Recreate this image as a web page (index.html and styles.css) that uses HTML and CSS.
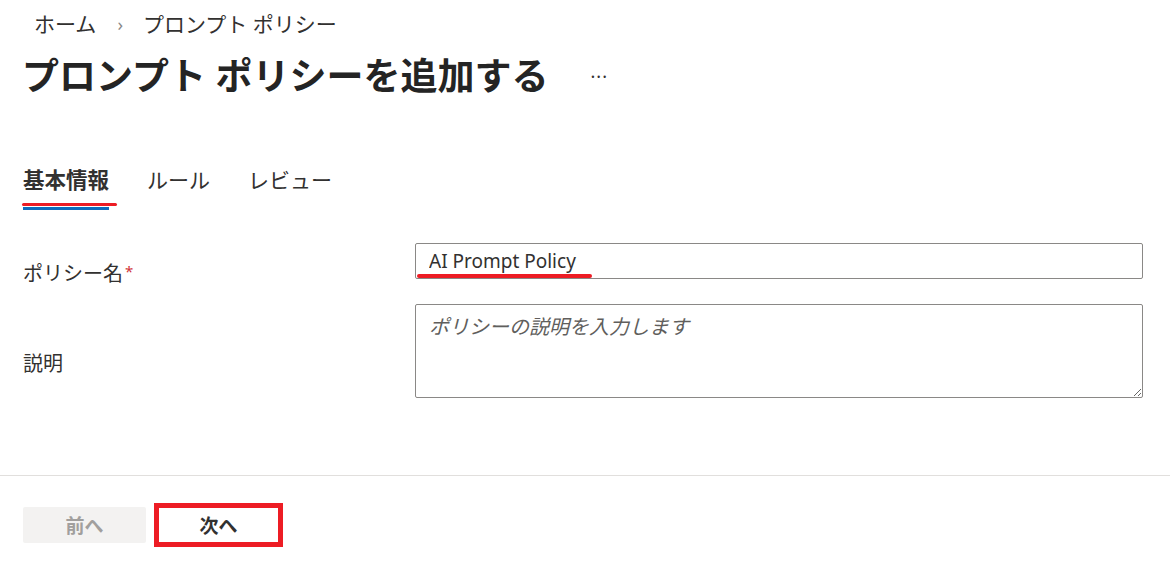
FILE: index.html
```html
<!DOCTYPE html>
<html lang="ja">
<head>
    <meta charset="UTF-8">
    <meta name="viewport" content="width=device-width, initial-scale=1.0">
    <title>プロンプト ポリシーを追加する</title>
    <link rel="stylesheet" href="styles.css">
</head>
<body>

<nav class="breadcrumb">
    <span class="crumb">ホーム</span>
    <span class="chevron">&#x203A;</span>
    <span class="crumb">プロンプト ポリシー</span>
</nav>

<div class="title-row">
    <h1>プロンプト ポリシーを追加する</h1>
    <span class="more">&middot;&middot;&middot;</span>
</div>

<div class="tabs">
    <div class="tab active">基本情報<span class="mark mark-tab"></span></div>
    <div class="tab">ルール</div>
    <div class="tab">レビュー</div>
</div>

<form class="form">
    <label class="label" for="policyName">ポリシー名<span class="req">*</span></label>
    <div class="field">
        <input type="text" id="policyName" value="AI Prompt Policy">
        <span class="mark mark-input"></span>
    </div>

    <label class="label" for="policyDesc">説明</label>
    <div class="field">
        <textarea id="policyDesc" placeholder="ポリシーの説明を入力します"></textarea>
    </div>
</form>

<div class="footer">
    <button class="btn btn-disabled" disabled>前へ</button>
    <button class="btn btn-next">次へ</button>
</div>

</body>
</html>
```

FILE: styles.css
```css
body {
    margin: 0;
    font-family: "Noto Sans", "Noto Sans CJK JP", sans-serif;
    color: #323130;
    background: #fff;
}

.breadcrumb {
    display: flex;
    align-items: center;
    height: 48px;
    padding-left: 34px;
    font-size: 21px;
    line-height: 28px;
}
.breadcrumb .chevron { color: #8a8886; font-size: 18px; margin: 0 20px 0 21px; }

.title-row {
    display: flex;
    align-items: center;
    height: 56px;
    padding-left: 22px;
}
.title-row h1 {
    margin: 0;
    font-size: 37px;
    line-height: 56px;
    font-weight: 700;
    color: #242424;
}
.title-row .more { margin-left: 42px; font-size: 18px; color: #323130; letter-spacing: 1px; }

.tabs {
    display: flex;
    gap: 38px;
    margin-top: 48px;
    padding-left: 23px;
}
.tab {
    position: relative;
    padding: 14px 0 16px;
    font-size: 21px;
    line-height: 28px;
}
.tab.active { font-weight: 700; font-size: 21.5px; }
.tab.active::after {
    content: "";
    position: absolute;
    left: 0;
    right: 0;
    bottom: 0;
    height: 3px;
    background: #0f6cbd;
}

.form {
    display: grid;
    grid-template-columns: 392px 1fr;
    row-gap: 25px;
    align-items: center;
    margin: 33px 27px 0 23px;
}
.label {
    padding-top: 13px;
    margin-bottom: -13px;
    font-size: 20px;
    line-height: 28px;
}
.req { color: #d13438; font-size: 15px; vertical-align: top; margin-left: 2px; line-height: 22px; }
.field { position: relative; display: flex; }
.field input,
.field textarea {
    width: 100%;
    box-sizing: border-box;
    border: 1px solid #8a8886;
    border-radius: 2px;
    font-family: inherit;
    color: #323130;
}
.field input { height: 36px; padding: 0 13px; line-height: 34px; font-size: 19px; }
.field textarea {
    height: 94px;
    padding: 8px 13px;
    font-size: 20px;
    line-height: 28px;
    resize: vertical;
}
.field textarea::placeholder { color: #605e5c; font-style: italic; }

/* red hand-drawn marks over the screenshot */
.mark { position: absolute; background: #ed1c24; border-radius: 2px; }
.mark-tab { left: -1px; width: 95px; bottom: 4px; height: 3px; }
.mark-input { left: 2px; width: 175px; top: 31px; height: 4px; }

.footer {
    display: flex;
    align-items: center;
    gap: 8px;
    margin-top: 77px;
    border-top: 1px solid #e1dfdd;
    padding: 27px 0 0 23px;
}
.btn {
    height: 36px;
    width: 123px;
    border: none;
    border-radius: 2px;
    font-family: inherit;
    font-size: 19px;
    font-weight: 700;
}
.btn-disabled { background: #f3f2f1; color: #a19f9d; }
.btn-next {
    height: 44px;
    width: 129px;
    background: #fff;
    color: #323130;
    border: 5px solid #ed1c24;
    border-radius: 0;
}
```
